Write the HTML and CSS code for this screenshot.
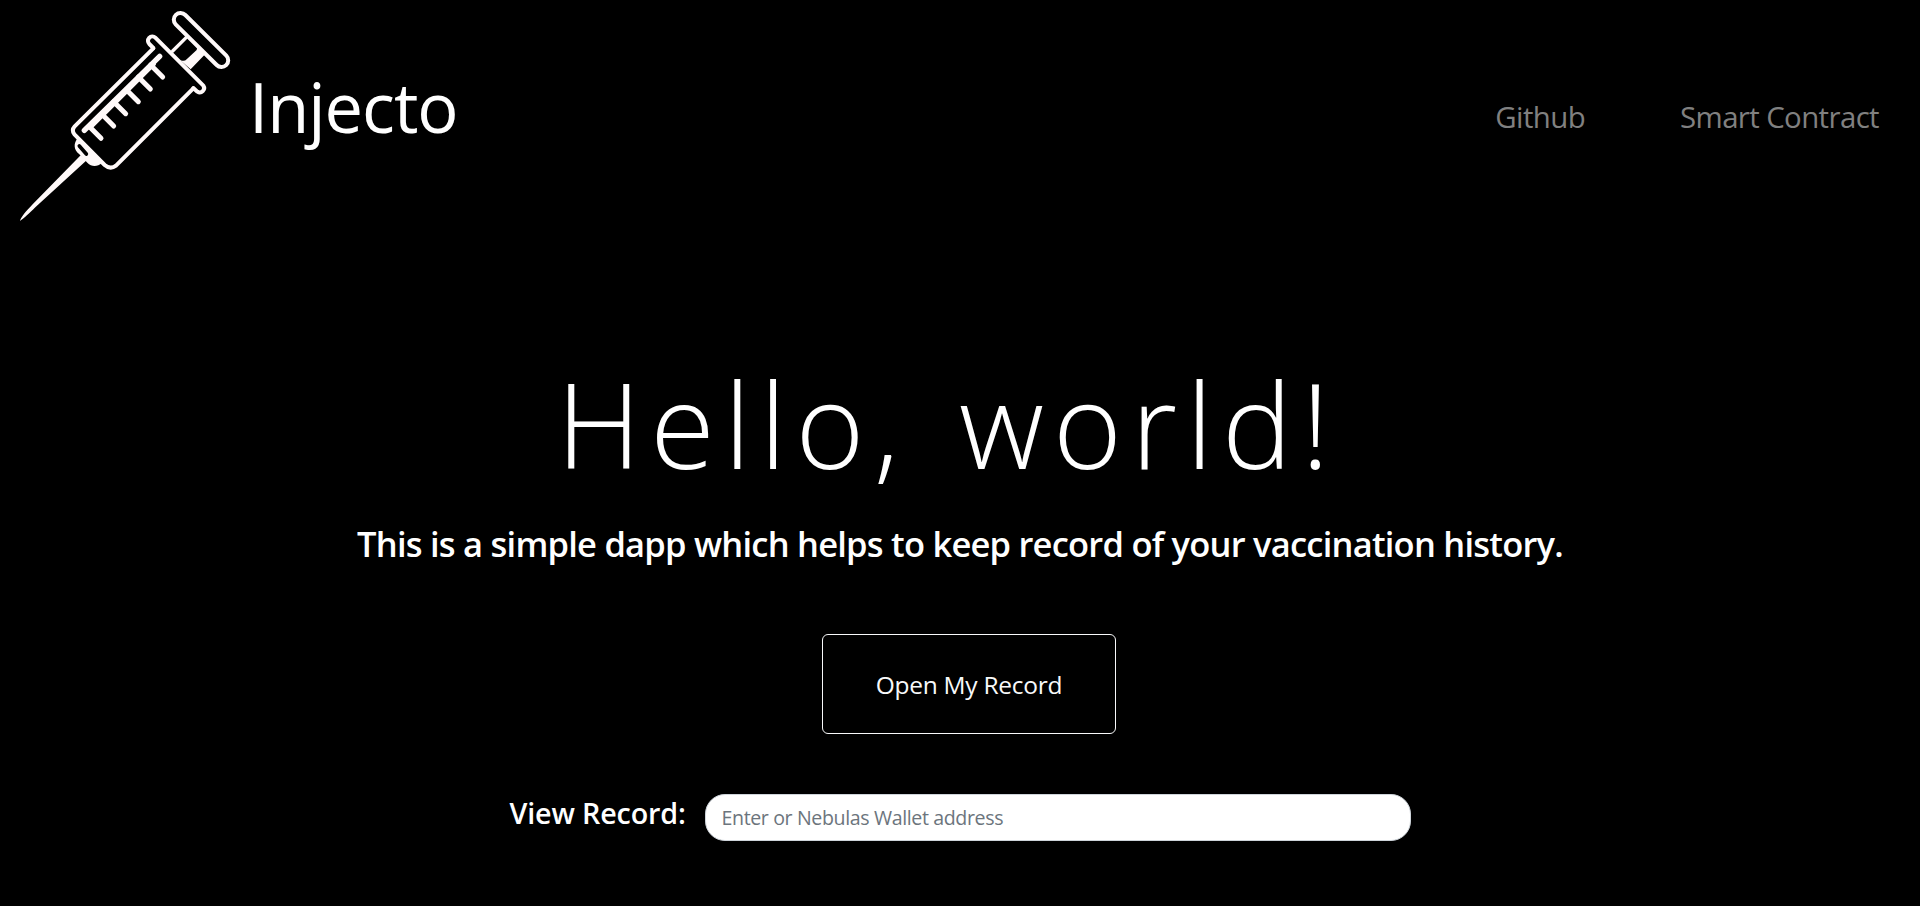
FILE: index.html
```
<!DOCTYPE html>
<html lang="en">
  <head>
    <meta charset="utf-8">
    <meta name="viewport" content="width=device-width, initial-scale=1.0">
    <title>Injecto</title>
    <link rel="stylesheet" href="styles.css">
  </head>
  <body>
    <header class="navbar">
      <a class="brand" href="#">
        <!-- syringe logo -->
        <svg class="logo" viewBox="0 0 750 720" fill="none" stroke="#fff9f9" stroke-width="12" stroke-linejoin="round" stroke-linecap="round">
          <!-- plunger -->
          <path d="M556 45 L679 167 A20 20 0 0 1 650 195 L527 73 A20 20 0 0 1 556 45 Z" />
          <path d="M559 112 L518 153" stroke-width="10" />
          <path d="M592 140 L616 162 L572 208 L540 180 Q553 186 560 178 L590 150 Q594 145 588 138 Z" fill="#fff9f9" stroke="none" />
          <!-- barrel -->
          <path d="M460 144 L448 132 A13 13 0 0 1 466 113 L610 257 A13 13 0 0 1 592 275 L580 264" />
          <path d="M460 145 L224 379 Q213 391 224 404 L314 495 Q331 510 348 497 L580 265" />
          <!-- scale -->
          <path d="M253 391 L479 169" stroke-width="16" />
          <path d="M272 382 L462 192" stroke-width="12" />
          <path d="M267 379 L303 415 M305 342 L341 378 M341 305 L377 341 M379 269 L415 305 M415 231 L451 267 M452 195 L488 231" stroke-width="15" />
          <!-- hub and needle -->
          <path d="M234 414 C220 428 220 450 238 463 L262 488 C275 501 292 501 306 488 Z" fill="#fff9f9" stroke="none" />
          <path d="M238 438 L259 462" stroke="#000" stroke-width="11" />
          <path d="M60 663 C62 652 80 632 98 613 L242 466 L260 481 L106 622 C88 640 72 655 60 663 Z" fill="#fff9f9" stroke="none" />
        </svg>
        <span class="brand-name">Injecto</span>
      </a>
      <nav class="links">
        <a href="#">Github</a>
        <a href="#">Smart Contract</a>
      </nav>
    </header>

    <main class="content">
      <h1>Hello, world!</h1>
      <p class="lead">This is a simple dapp which helps to keep record of your vaccination history.</p>
      <button class="btn" type="button">Open My Record</button>
      <form class="search">
        <label for="address">View Record:</label>
        <input id="address" type="text" placeholder="Enter or Nebulas Wallet address">
      </form>
    </main>
  </body>
</html>
```
FILE: styles.css
```
* {
  box-sizing: border-box;
}

body {
  margin: 0;
  background: #000;
  color: #fff;
  font-family: "Open Sans", "Noto Sans", sans-serif;
}

a {
  color: inherit;
  text-decoration: none;
}

.navbar {
  display: flex;
  align-items: center;
  justify-content: space-between;
  height: 240px;
  padding-right: 41px;
}

.brand {
  display: flex;
  align-items: center;
}

.logo {
  width: 250px;
  height: 240px;
}

.brand-name {
  margin: 0 0 26px -1px;
  font-size: 68.6px;
  line-height: 90px;
  letter-spacing: -1px;
}

.links {
  display: flex;
  gap: 95px;
  margin-bottom: 7px;
  color: #808080;
  font-size: 29.4px;
  line-height: 44px;
  letter-spacing: -0.6px;
}

.content {
  display: flex;
  flex-direction: column;
  align-items: center;
  padding-top: 111px;
}

h1 {
  margin: 0;
  font-size: 117.6px;
  font-weight: 300;
  line-height: 144px;
  letter-spacing: 9.2px;
  word-spacing: 11px;
  white-space: nowrap;
  padding-right: 25px;
}

.lead {
  margin: 23px 0 0;
  font-size: 34.5px;
  font-weight: 600;
  line-height: 52px;
  letter-spacing: -0.77px;
}

.btn {
  width: 294px;
  height: 100px;
  margin: 64px 0 0 18px;
  border: 1px solid #f8f9fa;
  border-radius: 6px;
  background: transparent;
  color: #f8f9fa;
  font-family: inherit;
  font-size: 24.5px;
  letter-spacing: -0.25px;
}

.search {
  display: flex;
  margin-top: 60px;
}

.search label {
  width: 195px;
  font-size: 28.7px;
  font-weight: 600;
  line-height: 38px;
  letter-spacing: -0.15px;
}

.search input {
  width: 706px;
  height: 47px;
  padding: 0 16px;
  border: 1px solid #ced4da;
  border-radius: 20px;
  background: #fff;
  font-family: inherit;
  font-size: 19.6px;
  letter-spacing: -0.38px;
}

.search input::placeholder {
  color: #6c757d;
}
```
